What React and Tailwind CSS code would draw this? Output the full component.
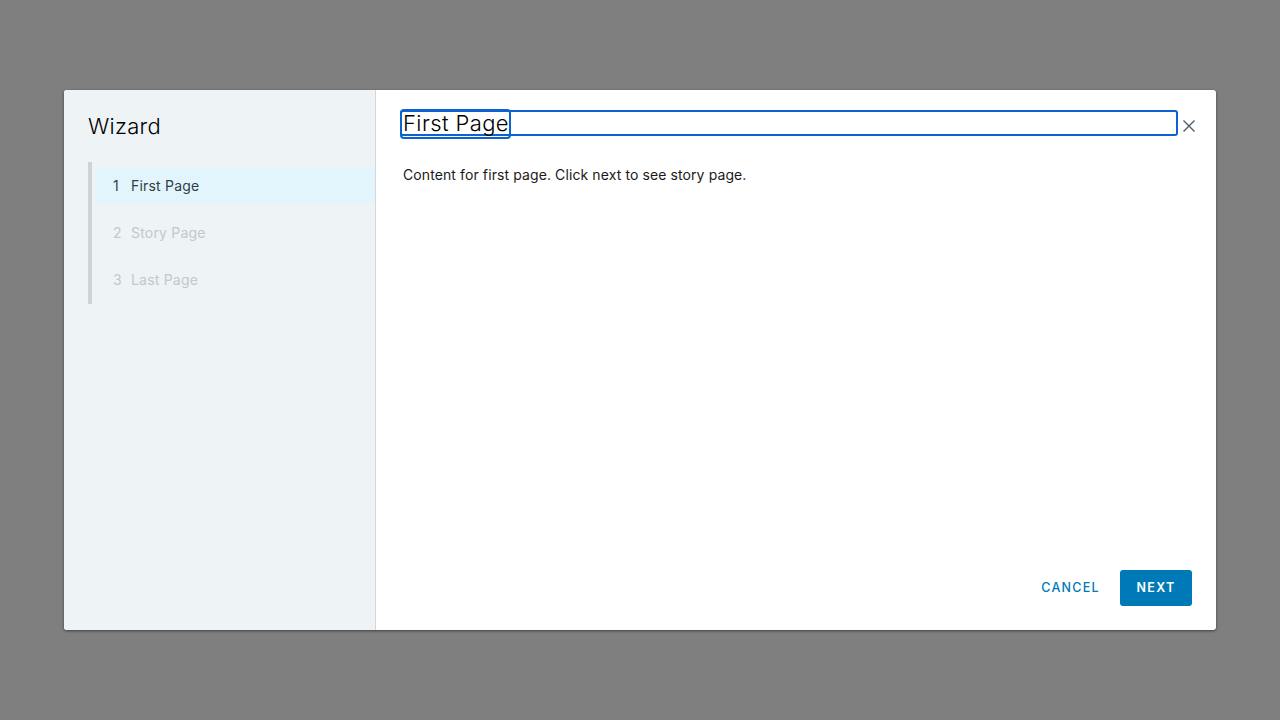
import React from "react";

const steps = [
  { n: 1, label: "First Page", active: true },
  { n: 2, label: "Story Page" },
  { n: 3, label: "Last Page" },
];

export default function App() {
  return (
    <div className="w-[1280px] h-[720px] bg-[#7f7f7f] flex items-start justify-center pt-[90px] font-['Inter',sans-serif]">
      <div className="w-[1152px] h-[540px] bg-white rounded-[3px] shadow-[0_1px_3px_rgba(0,0,0,0.5)] flex overflow-hidden">
        {/* step nav */}
        <div className="w-[312px] shrink-0 bg-[#eef3f6] border-r border-[#d7d7d7] pt-[20px]">
          <h2 className="pl-[24px] text-[22px] leading-[32px] font-light text-[#000] tracking-[0.3px]">Wizard</h2>
          <div className="ml-[24px] mt-[20px] border-l-4 border-[#ccd4d8] pt-[6px] pb-[6px]">
            {steps.map((s) => (
              <div
                key={s.n}
                className={
                  s.active
                    ? "ml-[4px] h-[36px] mb-[11px] flex items-center pl-[17px] pb-[1px] bg-[#e3f5fc] text-[#313d46] text-[14px] tracking-[0.2px]"
                    : "ml-[4px] h-[36px] mb-[11px] last:mb-0 flex items-center pl-[17px] pb-[1px] text-[#c2c8cc] text-[14px] tracking-[0.2px]"
                }
              >
                <span className="w-[18px]">{s.n}</span>
                <span>{s.label}</span>
              </div>
            ))}
          </div>
        </div>

        {/* content */}
        <div className="flex-1 flex flex-col pl-[24px] pr-[20px] pt-[20px] pb-[24px]">
          <div className="flex items-center">
            <div className="relative flex-1 h-[26px] border-2 border-[#0b63cf] rounded-[3px] flex items-center">
              <div className="absolute left-[-2px] top-[-3px] w-[111px] h-[30px] border-2 border-[#0b63cf] rounded-[4px]" />
              <span className="relative pl-[1px] pb-[1px] text-[22px] font-light text-black leading-none tracking-[0.4px]">First Page</span>
            </div>
            <button className="ml-[4px] w-[14px] h-[16px] flex items-center justify-center mt-[6px]">
              <svg width="14" height="14" viewBox="0 0 14 14" stroke="#4f5b64" strokeWidth="1.4" fill="none">
                <path d="M1.5 1.5 L12.5 12.5 M12.5 1.5 L1.5 12.5" />
              </svg>
            </button>
          </div>
          <p className="mt-[28px] pl-[3px] text-[14px] text-[#1a1a1a] tracking-[0.1px]">Content for first page. Click next to see story page.</p>
          <div className="flex-1" />
          <div className="flex items-center justify-end gap-[12px] pr-[4px]">
            <button className="h-[36px] px-[8px] text-[12.5px] font-medium tracking-[1.3px] text-[#0079b8]">CANCEL</button>
            <button className="h-[36px] w-[72px] rounded-[3px] bg-[#0079b8] text-white text-[12.5px] font-semibold tracking-[1.3px]">NEXT</button>
          </div>
        </div>
      </div>
    </div>
  );
}
